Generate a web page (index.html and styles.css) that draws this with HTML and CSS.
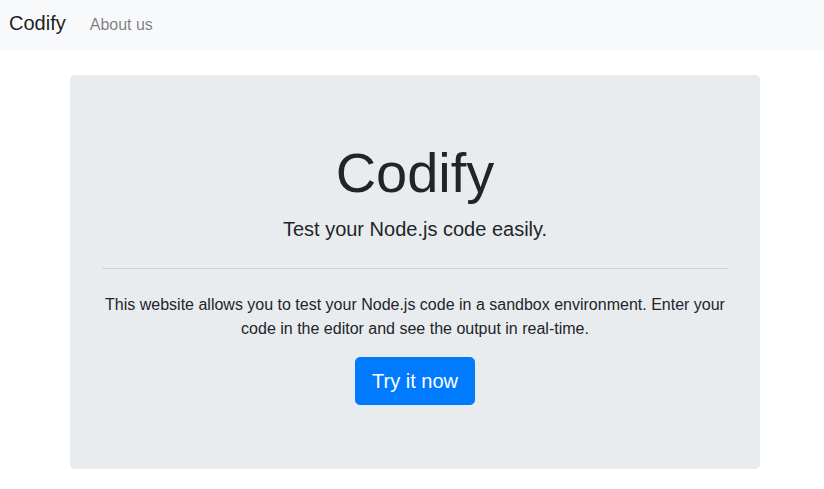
FILE: index.html
```html
<!DOCTYPE html>
<html lang="en">
<head>
<meta charset="utf-8">
<title>Codify</title>
<link rel="stylesheet" href="styles.css">
</head>
<body>
<nav class="navbar">
  <a class="brand" href="#">Codify</a>
  <a class="nav-link" href="#">About us</a>
</nav>
<main class="wrap">
  <section class="jumbotron">
    <h1 class="display">Codify</h1>
    <p class="lead">Test your Node.js code easily.</p>
    <hr class="divider">
    <p class="desc">This website allows you to test your Node.js code in a sandbox environment. Enter your code in the editor and see the output in real-time.</p>
    <a class="btn" href="#">Try it now</a>
  </section>
</main>
</body>
</html>
```
FILE: styles.css
```css
* { box-sizing: border-box; }
html, body { margin: 0; padding: 0; }
body {
  font-family: "Liberation Sans", Arial, sans-serif;
  font-size: 16px;
  line-height: 1.5;
  color: #212529;
  background: #fff;
}
a { text-decoration: none; }
.navbar {
  height: 50px;
  padding: 8px 9px 0;
  background: #f8f9fa;
  display: flex;
  align-items: baseline;
}
.brand {
  font-size: 20px;
  line-height: 30px;
  color: rgba(0,0,0,.9);
  margin-right: 16px;
}
.nav-link {
  font-size: 16px;
  line-height: 24px;
  padding: 0 8px;
  color: rgba(0,0,0,.5);
}
.wrap {
  width: 690px;
  margin: 25px 0 0 70px;
}
.jumbotron {
  background: #e9ecef;
  border-radius: 4.8px;
  padding: 64px 32px;
  text-align: center;
}
.display {
  margin: 0 0 8px;
  font-size: 56px;
  font-weight: 400;
  line-height: 1.2;
}
.lead {
  margin: 0;
  font-size: 20px;
  line-height: 30px;
  font-weight: 400;
}
.divider {
  margin: 24px 0;
  border: 0;
  border-top: 1px solid rgba(0,0,0,.1);
  height: 0;
}
.desc {
  margin: 0 0 16px;
}
.btn {
  display: inline-block;
  font-size: 20px;
  line-height: 30px;
  padding: 8px 16px;
  border: 1px solid #007bff;
  background: #007bff;
  color: #fff;
  border-radius: 4.8px;
  vertical-align: top;
}
```
